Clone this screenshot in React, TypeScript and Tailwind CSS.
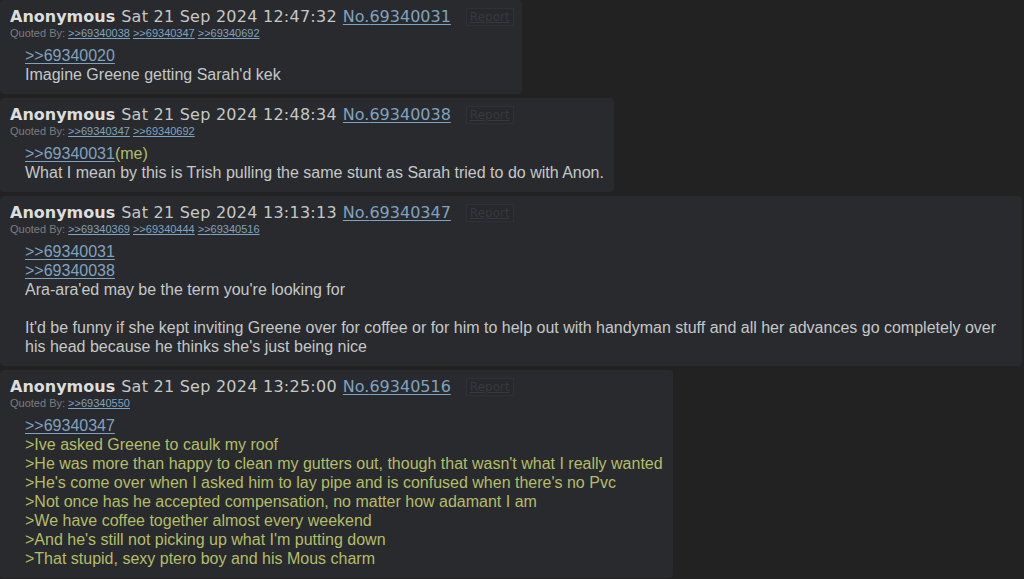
import React from 'react'

type Line = { text: string; kind?: 'link' | 'green' | 'blank'; me?: boolean }

type Post = {
  date: string
  no: string
  quotedBy: string[]
  body: Line[]
}

const posts: Post[] = [
  {
    date: 'Sat 21 Sep 2024 12:47:32',
    no: '69340031',
    quotedBy: ['69340038', '69340347', '69340692'],
    body: [
      { text: '>>69340020', kind: 'link' },
      { text: "Imagine Greene getting Sarah'd kek" },
    ],
  },
  {
    date: 'Sat 21 Sep 2024 12:48:34',
    no: '69340038',
    quotedBy: ['69340347', '69340692'],
    body: [
      { text: '>>69340031', kind: 'link', me: true },
      { text: 'What I mean by this is Trish pulling the same stunt as Sarah tried to do with Anon.' },
    ],
  },
  {
    date: 'Sat 21 Sep 2024 13:13:13',
    no: '69340347',
    quotedBy: ['69340369', '69340444', '69340516'],
    body: [
      { text: '>>69340031', kind: 'link' },
      { text: '>>69340038', kind: 'link' },
      { text: "Ara-ara'ed may be the term you're looking for" },
      { text: '', kind: 'blank' },
      {
        text: "It'd be funny if she kept inviting Greene over for coffee or for him to help out with handyman stuff and all her advances go completely over his head because he thinks she's just being nice",
      },
    ],
  },
  {
    date: 'Sat 21 Sep 2024 13:25:00',
    no: '69340516',
    quotedBy: ['69340550'],
    body: [
      { text: '>>69340347', kind: 'link' },
      { text: '>Ive asked Greene to caulk my roof', kind: 'green' },
      { text: ">He was more than happy to clean my gutters out, though that wasn't what I really wanted", kind: 'green' },
      { text: ">He's come over when I asked him to lay pipe and is confused when there's no Pvc", kind: 'green' },
      { text: '>Not once has he accepted compensation, no matter how adamant I am', kind: 'green' },
      { text: '>We have coffee together almost every weekend', kind: 'green' },
      { text: ">And he's still not picking up what I'm putting down", kind: 'green' },
      { text: '>That stupid, sexy ptero boy and his Mous charm', kind: 'green' },
    ],
  },
]

function BodyLine({ line }: { line: Line }) {
  if (line.kind === 'blank') return <div className="h-[19px]" />
  if (line.kind === 'link')
    return (
      <div>
        <a href="#" className="text-[#81a2be] underline underline-offset-2">
          {line.text}
        </a>
        {line.me && <span className="text-[#b5bd68]">(me)</span>}
      </div>
    )
  if (line.kind === 'green') return <div className="text-[#b5bd68]">{line.text}</div>
  return <div>{line.text}</div>
}

function PostCard({ post }: { post: Post }) {
  return (
    <div className="w-fit max-w-[1022px] mb-[4px] rounded-[4px] bg-[#282a2e] pt-[7px] pb-[10px] pr-[8px]">
      {/* header */}
      <div className="flex items-center pl-[10px] h-[20px] font-['DejaVu_Sans',sans-serif] text-[16px] leading-[20px] text-[#c5c8c6] whitespace-nowrap">
        <span className="font-bold text-[#dcdedd]">Anonymous</span>
        <span className="ml-[6px] tracking-[0.25px]">{post.date}</span>
        <a href="#" className="ml-[6px] text-[#81a2be] underline underline-offset-2">
          No.{post.no}
        </a>
        <span className="ml-[15px] border border-[#2f3135] bg-[#26282b] px-[3px] h-[18px] flex items-center text-[12px] leading-[14px] text-[#36393d] underline">
          Report
        </span>
      </div>
      <div className="pl-[10px] h-[12px] font-['Liberation_Sans',Arial,sans-serif] text-[11px] leading-[12px] text-[#7c7e80] whitespace-nowrap">
        Quoted By:{' '}
        {post.quotedBy.map((q) => (
          <a key={q} href="#" className="mr-[3px] text-[#81a2be] underline">
            &gt;&gt;{q}
          </a>
        ))}
      </div>
      {/* body */}
      <div className="mt-[7px] pl-[25px] pr-[2px] font-['Liberation_Sans',Arial,sans-serif] text-[16px] leading-[19px] text-[#c5c8c6]">
        {post.body.map((line, i) => (
          <BodyLine key={i} line={line} />
        ))}
      </div>
    </div>
  )
}

export default function App() {
  return (
    <div className="min-h-screen bg-[#222222] overflow-hidden">
      {posts.map((p) => (
        <PostCard key={p.no} post={p} />
      ))}
    </div>
  )
}
